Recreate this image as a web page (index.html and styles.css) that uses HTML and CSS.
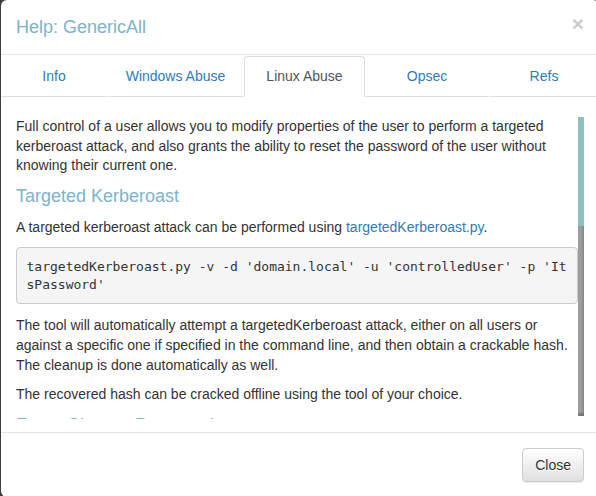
FILE: index.html
```html
<!DOCTYPE html>
<html lang="en">
<head>
    <meta charset="UTF-8">
    <meta name="viewport" content="width=device-width, initial-scale=1.0">
    <title>Help: GenericAll</title>
    <link rel="stylesheet" href="styles.css">
</head>
<body>
    <div class="modal">
        <div class="modal-header">
            <h4 class="modal-title">Help: GenericAll</h4>
            <button class="close" type="button">&times;</button>
        </div>

        <ul class="nav-tabs">
            <li><a href="#">Info</a></li>
            <li><a href="#">Windows Abuse</a></li>
            <li class="active"><a href="#">Linux Abuse</a></li>
            <li><a href="#">Opsec</a></li>
            <li><a href="#">Refs</a></li>
        </ul>

        <div class="modal-body">
            <div class="tab-pane">
                <p>
                    Full control of a user allows you to modify properties of the user to perform a targeted
                    kerberoast attack, and also grants the ability to reset the password of the user without
                    knowing their current one.
                </p>

                <h4>Targeted Kerberoast</h4>
                <p>A targeted kerberoast attack can be performed using <a href="#">targetedKerberoast.py</a>.</p>
                <pre><code>targetedKerberoast.py -v -d 'domain.local' -u 'controlledUser' -p 'ItsPassword'</code></pre>
                <p>
                    The tool will automatically attempt a targetedKerberoast attack, either on all users or
                    against a specific one if specified in the command line, and then obtain a crackable hash.
                    The cleanup is done automatically as well.
                </p>
                <p>The recovered hash can be cracked offline using the tool of your choice.</p>

                <h4>Force Change Password</h4>
            </div>
            <div class="scrollbar">
                <div class="scrollbar-thumb"></div>
            </div>
        </div>

        <div class="modal-footer">
            <button class="btn" type="button">Close</button>
        </div>
    </div>
</body>
</html>
```

FILE: styles.css
```css
* {
    box-sizing: border-box;
}

html,
body {
    height: 100%;
}

body {
    margin: 0;
    overflow: hidden;
    background: #3d3d3d;
    font-family: "Liberation Sans", Arial, sans-serif;
    font-size: 14px;
    line-height: 1.4;
    color: #333;
}

a {
    color: #337ab7;
    text-decoration: none;
}

.modal {
    width: 598px;
    margin-left: 1px;
    background: #fff;
    border-radius: 6px;
}

/* header */

.modal-header {
    display: flex;
    justify-content: space-between;
    align-items: flex-start;
    padding: 16px 15px 16px;
    border-bottom: 1px solid #e5e5e5;
}

.modal-title {
    margin: 0;
    font-size: 18px;
    font-weight: 500;
    line-height: 22px;
    color: #80b2cb;
}

.close {
    margin-top: -3px;
    padding: 0;
    border: 0;
    background: transparent;
    font-family: "Liberation Sans", Arial, sans-serif;
    font-size: 21px;
    font-weight: bold;
    line-height: 1;
    color: #000;
    opacity: 0.2;
    cursor: pointer;
}

/* tabs */

.nav-tabs {
    display: grid;
    grid-template-columns: 106px 137px 121px 124px 1fr;
    margin: 1px 0 0;
    padding: 0;
    list-style: none;
}

.nav-tabs a {
    display: block;
    padding: 10px 0;
    line-height: 19px;
    text-align: center;
    border: 1px solid transparent;
    border-bottom-color: #ddd;
    border-radius: 4px 4px 0 0;
}

.nav-tabs .active a {
    color: #555;
    background: #fff;
    border-color: #ddd #ddd transparent;
}

/* body */

.modal-body {
    display: flex;
    align-items: flex-start;
    padding: 20px 15px 13px;
}

.tab-pane {
    flex: 1;
    min-width: 0;
    height: 302px;
    overflow: hidden;
}

.scrollbar {
    width: 6px;
    height: 299px;
    background: linear-gradient(to right, #a6a7ab, #8f9094);
    box-shadow: inset 0 -3px 2px rgba(0, 0, 0, 0.25);
}

.scrollbar-thumb {
    height: 109px;
    background: #8cc0c2;
}

.tab-pane p {
    margin: 0 0 10px;
}

.tab-pane h4 {
    margin: 10px 0 12px;
    font-size: 18px;
    font-weight: 500;
    line-height: 20px;
    color: #80b2cb;
}

pre {
    margin: 0 0 12px;
    padding: 9.5px;
    background: #f5f5f5;
    border: 1px solid #ccc;
    border-radius: 4px;
    font-family: "DejaVu Sans Mono", monospace;
    font-size: 13px;
    line-height: 18px;
    color: #333;
    white-space: pre-wrap;
    word-break: break-all;
}

/* footer */

.modal-footer {
    padding: 15px;
    text-align: right;
    border-top: 1px solid #e5e5e5;
}

.btn {
    padding: 6px 12px;
    font-family: "Liberation Sans", Arial, sans-serif;
    font-size: 14px;
    line-height: 20px;
    color: #333;
    background: linear-gradient(to bottom, #fff 0%, #e0e0e0 100%);
    border: 1px solid #ccc;
    border-radius: 4px;
    text-shadow: 0 1px 0 #fff;
    box-shadow: inset 0 1px 0 rgba(255, 255, 255, 0.15), 0 1px 1px rgba(0, 0, 0, 0.075);
    cursor: pointer;
}
```
